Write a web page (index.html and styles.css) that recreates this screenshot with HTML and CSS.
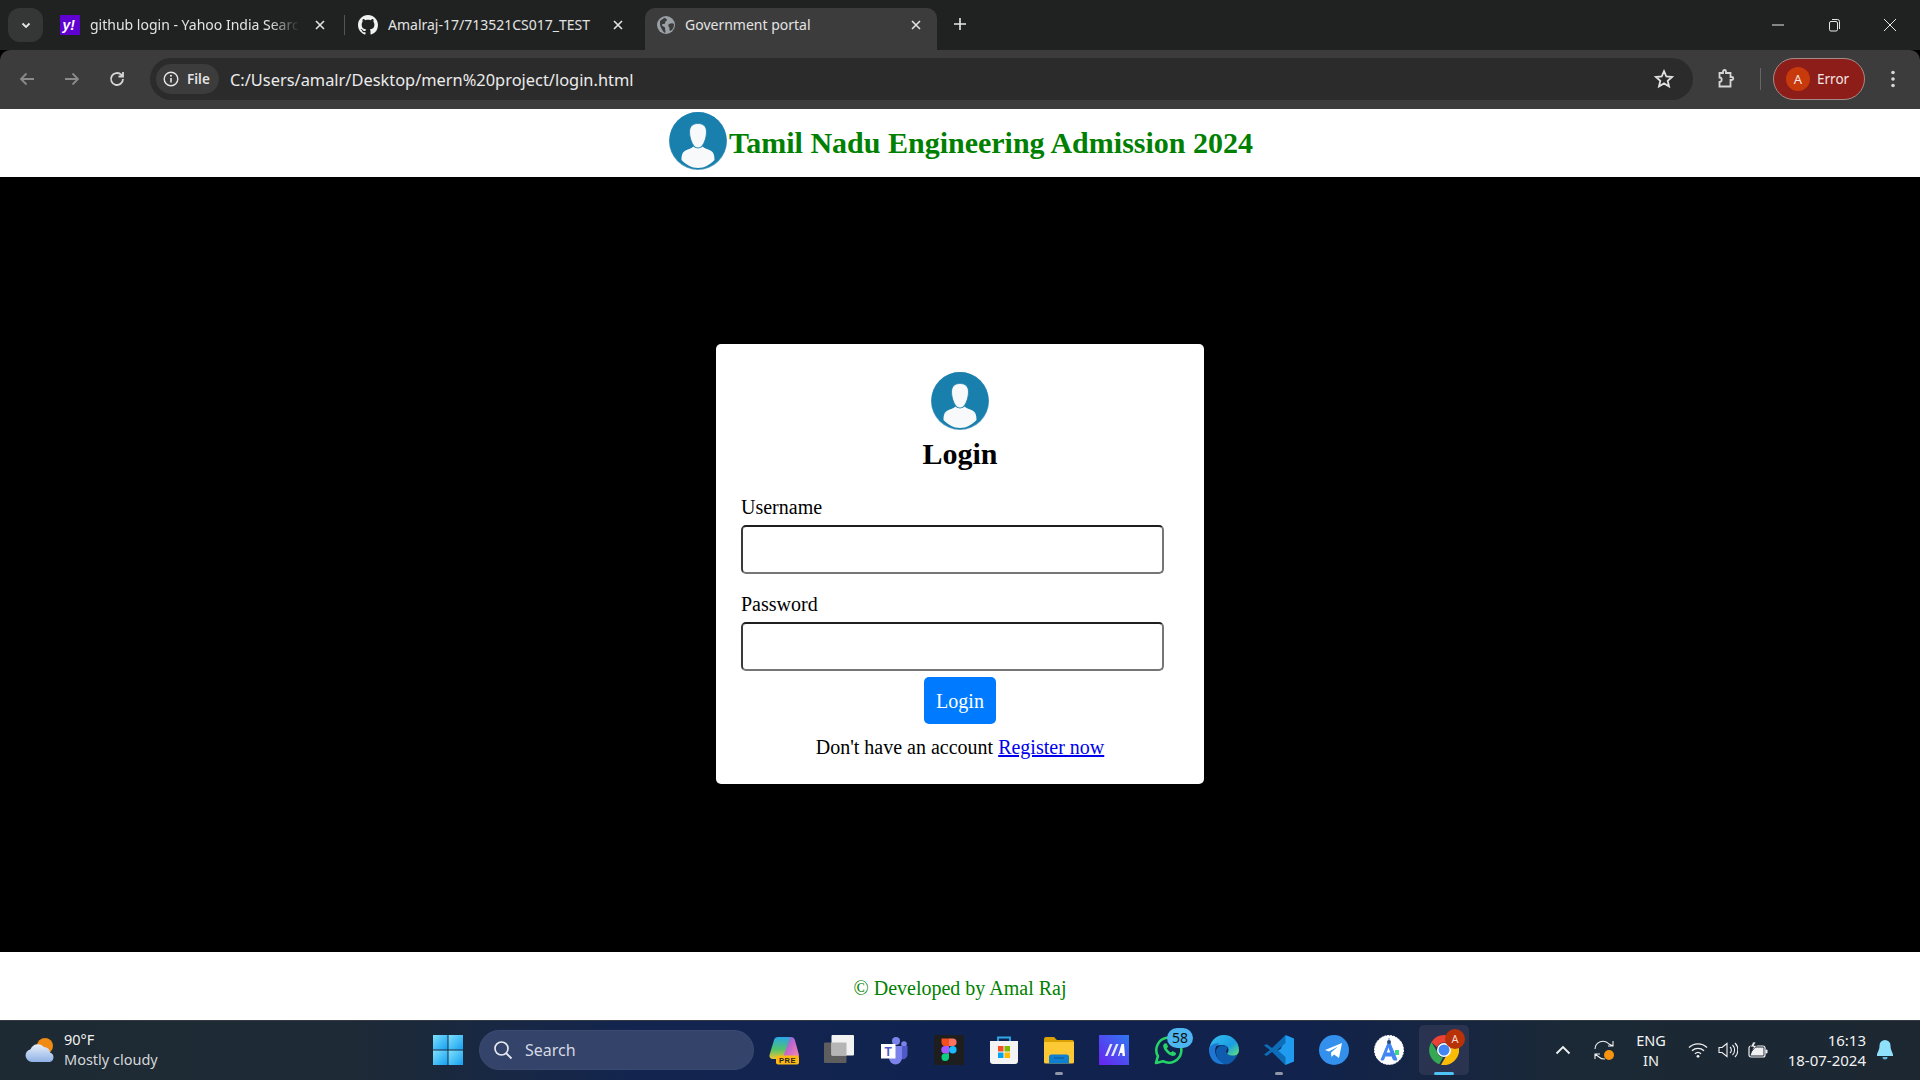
FILE: index.html
```html
<!DOCTYPE html>
<html lang="en">
<head>
  <meta charset="UTF-8" />
  <title>Government portal</title>
  <link rel="stylesheet" href="styles.css">
</head>
<body>

  <svg class="sprites" width="0" height="0">
    <defs>
      <symbol id="avatar" viewBox="0 0 58 58">
        <circle cx="29" cy="29" r="29" fill="#6aa9c9"/>
        <circle cx="29" cy="28.6" r="28.6" fill="#1980ae"/>
        <path d="M12.500 48c0-5 1-8 4-9.500 3-1.500 6-2 8-4 1.500 2 7.500 2 9 0 2 2 5 2.500 8 4 3 1.500 4 4.500 4 9.500-4.500 4.500-10 8-16.500 8s-12-3.500-16.500-8z" fill="#f7f9fa"/>
        <path d="M20.500 20c0-6 3.500-8.500 8.500-8.500s8.500 2.500 8.500 8.500c0 5-2 11-4.500 14-1 1-2.500 2-4 2s-3-1-4-2c-2.500-3-4.500-9-4.500-14z" fill="#f7f9fa" stroke="#1980ae" stroke-width=".8"/>
      </symbol>
      <linearGradient id="edgeA" x1="0" y1="0" x2="1" y2="1"><stop offset="0" stop-color="#35c1f1"/><stop offset=".6" stop-color="#1b9de2"/><stop offset="1" stop-color="#66eb6e"/></linearGradient>
      <linearGradient id="copA" x1="0" y1="0" x2="0" y2="1"><stop offset="0" stop-color="#2aa6e8"/><stop offset=".55" stop-color="#4fc36f"/><stop offset="1" stop-color="#f2c531"/></linearGradient>
      <linearGradient id="copB" x1="0" y1="0" x2="1" y2="1"><stop offset="0" stop-color="#3f7fe8"/><stop offset=".5" stop-color="#c768c9"/><stop offset="1" stop-color="#f58ab0"/></linearGradient>
      <linearGradient id="maBg" x1="1" y1="0" x2="0" y2="1"><stop offset="0" stop-color="#2f78f2"/><stop offset="1" stop-color="#6a22f0"/></linearGradient>
      <linearGradient id="cloud" x1="0" y1="0" x2="0" y2="1"><stop offset="0" stop-color="#e8eff9"/><stop offset="1" stop-color="#8fb2e6"/></linearGradient>
      <linearGradient id="winA" x1="0" y1="0" x2="1" y2="1"><stop offset="0" stop-color="#7fe0fb"/><stop offset="1" stop-color="#14a0f2"/></linearGradient>
    </defs>
  </svg>

  <!-- tab strip -->
  <div class="tabstrip">
    <button class="tab-list">
      <svg width="12" height="12" viewBox="0 0 12 12"><path d="M2.500 4.500 6 8l3.500-3.500" fill="none" stroke="#e6e6e6" stroke-width="1.800"/></svg>
    </button>
    <div class="tab">
      <svg class="favicon" viewBox="0 0 20 20"><rect width="20" height="20" fill="#5f01d1"/><text x="2.500" y="15" class="yahoo-y">y!</text></svg>
      <span class="tab-title fade">github login - Yahoo India Search</span>
      <svg class="tab-close" viewBox="0 0 12 12"><path d="M2 2l8 8M10 2l-8 8"/></svg>
    </div>
    <div class="tab-sep"></div>
    <div class="tab">
      <svg class="favicon" viewBox="0 0 16 16"><path fill="#f2f2f2" d="M8 0C3.580 0 0 3.580 0 8c0 3.540 2.290 6.530 5.470 7.590.4.070.55-.17.55-.38 0-.19-.01-.82-.01-1.490-2.010.37-2.530-.49-2.690-.94-.09-.23-.48-.94-.82-1.130-.28-.15-.68-.52-.01-.53.63-.01 1.080.58 1.230.82.720 1.210 1.870.87 2.330.66.070-.52.280-.87.510-1.070-1.780-.2-3.640-.89-3.640-3.950 0-.87.310-1.590.820-2.150-.08-.2-.36-1.020.08-2.120 0 0 .67-.21 2.200.82.640-.18 1.320-.27 2-.27s1.360.09 2 .27c1.530-1.040 2.200-.82 2.200-.82.440 1.100.16 1.920.08 2.120.51.560.82 1.270.82 2.150 0 3.070-1.870 3.750-3.650 3.950.29.250.54.730.54 1.480 0 1.070-.01 1.930-.01 2.200 0 .21.150.46.550.38A8.010 8.010 0 0 0 16 8c0-4.420-3.580-8-8-8z"/></svg>
      <span class="tab-title">Amalraj-17/713521CS017_TEST</span>
      <svg class="tab-close" viewBox="0 0 12 12"><path d="M2 2l8 8M10 2l-8 8"/></svg>
    </div>
    <div class="tab active">
      <svg class="favicon" viewBox="0 0 20 20"><circle cx="10" cy="10" r="9" fill="#9aa0a6"/><path d="M4 6c2-1 3-3 5-3 1 1 2 1 2 2s-2 1-2 3-3 0-3 2 3 1 3 3 1 4 0 5C7 17 5 13 4 10zM13 9c2-1 4-1 5 0 0 3-1 6-4 7-1-1 0-3-1-4s-1-2 0-3z" fill="#3c3c3c"/></svg>
      <span class="tab-title">Government portal</span>
      <svg class="tab-close" viewBox="0 0 12 12"><path d="M2 2l8 8M10 2l-8 8"/></svg>
    </div>
    <button class="new-tab">
      <svg width="14" height="14" viewBox="0 0 14 14"><path d="M7 1v12M1 7h12" stroke="#e8e8e8" stroke-width="1.600"/></svg>
    </button>
    <div class="window-controls">
      <span class="win-btn"><svg width="14" height="14" viewBox="0 0 14 14"><path d="M1 7h12" stroke="#e8e8e8"/></svg></span>
      <span class="win-btn"><svg width="14" height="14" viewBox="0 0 14 14"><rect x="2.500" y="3.500" width="8" height="9.500" rx="1.500" fill="none" stroke="#e8e8e8"/><path d="M5 1.500h5.500a2 2 0 0 1 2 2V11" fill="none" stroke="#e8e8e8"/></svg></span>
      <span class="win-btn"><svg width="14" height="14" viewBox="0 0 14 14"><path d="M1 1l12 12M13 1L1 13" stroke="#e8e8e8"/></svg></span>
    </div>
  </div>

  <!-- address bar -->
  <div class="toolbar">
    <span class="nav-btn"><svg width="18" height="18" viewBox="0 0 18 18"><path d="M16 9H3M8.500 3.500 3 9l5.500 5.500" class="dim"/></svg></span>
    <span class="nav-btn"><svg width="18" height="18" viewBox="0 0 18 18"><path d="M2 9h13M9.500 3.500 15 9l-5.500 5.500" class="dim"/></svg></span>
    <span class="nav-btn"><svg width="18" height="18" viewBox="0 0 18 18"><path d="M15 9a6 6 0 1 1-1.800-4.300L15 6.500M15 2v4.500h-4.500" class="lit"/></svg></span>
    <div class="omnibox">
      <div class="file-chip">
        <svg width="16" height="16" viewBox="0 0 16 16"><circle cx="8" cy="8" r="6.800" fill="none" stroke="#e6e6e6" stroke-width="1.400"/><path d="M8 7v4.500" stroke="#e6e6e6" stroke-width="1.600"/><circle cx="8" cy="4.800" r="1" fill="#e6e6e6"/></svg>
        <span>File</span>
      </div>
      <span class="url">C:/Users/amalr/Desktop/mern%20project/login.html</span>
      <svg class="star" width="20" height="20" viewBox="0 0 20 20"><path d="M10 2.200l2.300 5.300 5.700.5-4.300 3.800 1.300 5.600-5-3-5 3 1.300-5.600L2 8l5.700-.5z" fill="none" stroke="#e2e2e2" stroke-width="1.800"/></svg>
    </div>
    <span class="nav-btn ext"><svg width="20" height="20" viewBox="0 0 20 20"><path d="M4 4.500h3.500V3a1.500 1.500 0 0 1 3 0v1.500H15v4h1.300a1.500 1.500 0 0 1 0 3H15V18H4v-4.500c1.500 0 2.200-1 2.200-2.200S5.500 9 4 9z" class="lit" transform="translate(-.5 -.5)"/></svg></span>
    <div class="toolbar-sep"></div>
    <div class="profile-pill">
      <span class="profile-dot">A</span>
      <span>Error</span>
    </div>
    <span class="nav-btn menu"><svg width="6" height="20" viewBox="0 0 6 20"><circle cx="3" cy="3.500" r="1.800"/><circle cx="3" cy="10" r="1.800"/><circle cx="3" cy="16.500" r="1.800"/></svg></span>
  </div>

  <!-- the page -->
  <header class="site-header">
    <svg class="logo"><use href="#avatar"/></svg>
    <h1>Tamil Nadu Engineering Admission 2024</h1>
  </header>

  <main class="site-main">
    <form class="login-card">
      <svg class="logo"><use href="#avatar"/></svg>
      <h2>Login</h2>
      <div class="field">
        <label for="username">Username</label>
        <input id="username" type="text">
      </div>
      <div class="field">
        <label for="password">Password</label>
        <input id="password" type="password">
      </div>
      <button class="login-btn" type="button">Login</button>
      <p class="signup">Don't have an account <a href="#">Register now</a></p>
    </form>
  </main>

  <footer class="site-footer">© Developed by Amal Raj</footer>

  <!-- windows taskbar -->
  <div class="taskbar">
    <div class="weather">
      <svg width="32" height="26" viewBox="0 0 32 26"><circle cx="21" cy="9" r="8" fill="#f08a12"/><path d="M8 25a6.500 6.500 0 0 1-1.500-12.800A8 8 0 0 1 20 10a6 6 0 0 1 6 5.500 5 5 0 0 1 0 9.500z" fill="url(#cloud)"/></svg>
      <div class="weather-text">
        <span class="temp">90°F</span>
        <span class="cond">Mostly cloudy</span>
      </div>
    </div>

    <span class="slot">
      <svg width="30" height="30" viewBox="0 0 30 30"><rect x="0" y="0" width="14.500" height="14.500" fill="url(#winA)"/><rect x="15.500" y="0" width="14.500" height="14.500" fill="url(#winA)"/><rect x="0" y="15.500" width="14.500" height="14.500" fill="url(#winA)"/><rect x="15.500" y="15.500" width="14.500" height="14.500" fill="url(#winA)"/></svg>
    </span>

    <div class="search">
      <svg width="20" height="20" viewBox="0 0 20 20"><circle cx="8.500" cy="8.500" r="6.500" fill="none" stroke="#e6e9f0" stroke-width="1.700"/><path d="M13 13l5.500 5.500" stroke="#e6e9f0" stroke-width="1.900"/></svg>
      <span>Search</span>
    </div>

    <div class="apps">
      <span class="slot">
        <svg width="30" height="30" viewBox="0 0 30 30">
          <path d="M19 2h3c2 0 3.300 1 3.900 3L29.700 19c.6 2.500-.7 4-3 4H13z" fill="url(#copB)"/>
          <path d="M9 2h9.500c1.500 0 2.200 1 1.700 2.500L14.500 21c-.7 2-2 3-4 3H4c-2.700 0-4-1.700-3.500-4L5 5c.6-2 2-3 4-3z" fill="url(#copA)"/>
          <rect x="7" y="20.500" width="23" height="9" rx="2" fill="#fdb813"/>
          <text x="18.500" y="27.700" text-anchor="middle" class="pre">PRE</text>
        </svg>
      </span>
      <span class="slot">
        <svg width="30" height="30" viewBox="0 0 30 30"><rect x="0" y="7.500" width="22.500" height="20.500" rx="1" fill="#5e5e5e"/><rect x="7.500" y="0" width="22.500" height="20.500" rx="1" fill="#f2f2f2"/><rect x="7.500" y="7.500" width="15" height="13" fill="#b5b5b5"/></svg>
      </span>
      <span class="slot">
        <svg width="30" height="30" viewBox="0 0 30 30"><circle cx="25" cy="9" r="2.800" fill="#7b83eb"/><circle cx="17" cy="6" r="4" fill="#7b83eb"/><path d="M20 11h8.500v9a4.500 4.500 0 0 1-7 3.500z" fill="#5059c9"/><path d="M10 11h13v12a6.500 6.500 0 0 1-13 0z" fill="#7b83eb"/><rect x="2" y="9" width="14.500" height="14.500" fill="#fff"/><text x="9.200" y="20.500" text-anchor="middle" class="teams-t">T</text></svg>
      </span>
      <span class="slot">
        <svg width="30" height="30" viewBox="0 0 30 30"><rect width="30" height="30" fill="#1e1e1e"/><path d="M7.500 3.500h7.500v7.500H11a3.750 3.750 0 0 1-3.500-3.750z" fill="#f24e1e"/><path d="M15 3.500h3.800a3.750 3.750 0 0 1 0 7.500H15z" fill="#ff7262"/><path d="M15 11h-4a3.750 3.750 0 0 0 0 7.500h4z" fill="#a259ff"/><circle cx="18.800" cy="14.750" r="3.750" fill="#1abcfe"/><path d="M11 18.500h4v3.750a3.750 3.750 0 1 1-4-3.750z" fill="#0acf83"/></svg>
      </span>
      <span class="slot">
        <svg width="30" height="30" viewBox="0 0 30 30"><path d="M9 6V2.500h12V6" fill="none" stroke="#2fa8e8" stroke-width="1.800"/><path d="M1 6h28v20a3 3 0 0 1-3 3H4a3 3 0 0 1-3-3z" fill="#f4f4f4"/><rect x="9" y="11" width="5.500" height="5.500" fill="#f25022"/><rect x="15.500" y="11" width="5.500" height="5.500" fill="#7fba00"/><rect x="9" y="17.500" width="5.500" height="5.500" fill="#00a4ef"/><rect x="15.500" y="17.500" width="5.500" height="5.500" fill="#ffb900"/></svg>
      </span>
      <span class="slot open">
        <svg width="30" height="28" viewBox="0 0 30 28"><path d="M0 3a2 2 0 0 1 2-2h8l3 3h15a2 2 0 0 1 2 2v3H0z" fill="#d9a106"/><path d="M0 6h30v20a1.500 1.500 0 0 1-1.500 1.500h-27A1.500 1.500 0 0 1 0 26z" fill="#fcc934"/><path d="M5 27.500V21a2.500 2.500 0 0 1 2.500-2.500h15A2.500 2.500 0 0 1 25 21v6.500z" fill="#0f7fd0"/><path d="M10 22h10" stroke="#0b5ea0" stroke-width="1.200"/></svg>
      </span>
      <span class="slot">
        <svg width="30" height="30" viewBox="0 0 30 30"><rect width="30" height="30" fill="url(#maBg)"/><path d="M6 21l5-12h2.500l-5 12zM12 21l5-12h2.500l-5 12z" fill="#e6e8ff"/><path d="M19 21l3.500-12H25l1 12h-2.500l-.2-3h-2.200l-.8 3z" fill="#fff"/></svg>
      </span>
      <span class="slot has-badge">
        <svg width="30" height="30" viewBox="0 0 30 30"><path d="M2 28l1.900-6.800A12.500 12.500 0 1 1 9 26.200z" fill="none" stroke="#25d366" stroke-width="2.600" stroke-linejoin="round"/><path d="M10.500 8.500c-2 1.500-1.500 4 .5 7s5 5 7.500 5.500c2 .3 3.800-1.200 3.500-3l-3.500-2-1.500 1.500c-1.500-.5-3.500-2.500-4.200-4.200l1.400-1.500-1.700-3.500z" fill="#25d366"/></svg>
        <span class="badge-count">58</span>
      </span>
      <span class="slot">
        <svg width="30" height="30" viewBox="0 0 30 30"><path d="M15 0a15 15 0 0 1 15 15c0 4-3 6.500-7 6.500-3 0-5-1-5-2.500 0-1 1.500-1.500 1.500-4 0-3-3-5-6.500-5C6 10 1.500 13 0 17 0 7 6.500 0 15 0z" fill="url(#edgeA)"/><path d="M0 15c0-4 5-7.500 10.500-6.500-4 2-5 6-4 10 1 4.500 5 8.500 10 10.500C7 31 0 24 0 15z" fill="#1c78d4"/><path d="M7 17c0-4 3-6.500 7-6.500 3 0 5 2 4 4-1 1.500-1 3 .5 4.500 2 1.500 7 2.500 10 .5-2 5-7 10-12 10C11 27 7 22 7 17z" fill="#0f5cae"/></svg>
      </span>
      <span class="slot open">
        <svg width="30" height="30" viewBox="0 0 30 30"><path d="M21.500 0 30 3.500v23L21.500 30 10 18.500l7-5z" fill="#1f9cf0"/><path d="M21.500 0 8 13 2.500 9 0 10.500 6 15l-6 4.500L2.500 21 8 17l13.500 13V22l-8-7 8-7z" fill="#0e6db8"/></svg>
      </span>
      <span class="slot">
        <svg width="30" height="30" viewBox="0 0 30 30"><circle cx="15" cy="15" r="15" fill="#3390ec"/><path d="M6 15l17-7-3 15-5-3.500-2.500 2.500-.5-4.500 7-6-9 5z" fill="#fff"/></svg>
      </span>
      <span class="slot">
        <svg width="30" height="30" viewBox="0 0 30 30"><circle cx="15" cy="15" r="14.500" fill="#fff" stroke="#fff" stroke-dasharray="2 1"/><path d="M15 3v3M7 25l7-17h2l7 17h-3.500l-1.500-4h-7l-1.500 4zm5-7h5l-2.500-6.500z" fill="#4285f4" stroke="#4285f4"/><circle cx="15" cy="7" r="2" fill="#2b4a7a"/><path d="M21 15h4v5h-4z" fill="#3ddc84"/></svg>
      </span>
      <span class="slot chrome">
        <svg width="30" height="30" viewBox="0 0 30 30"><path d="M15 0a15 15 0 0 1 13 7.500H15a7.500 7.500 0 0 0-7 4.800L2.500 7A15 15 0 0 1 15 0z" fill="#ea4335"/><path d="M2.500 7 8 16.500a7.500 7.500 0 0 0 6 6L10.300 29.300A15 15 0 0 1 2.500 7z" fill="#34a853"/><path d="M28 7.500A15 15 0 0 1 12 29.700l6.500-10.900A7.500 7.500 0 0 0 20 7.500z" fill="#fbbc05"/><circle cx="15" cy="15" r="7" fill="#fff"/><circle cx="15" cy="15" r="5.500" fill="#4285f4"/></svg>
        <span class="badge-a">A</span>
      </span>
    </div>

    <div class="tray">
      <svg class="tray-chevron" width="16" height="10" viewBox="0 0 16 10"><path d="M1.500 8.500 8 2l6.500 6.500" fill="none" stroke="#f2f2f2" stroke-width="1.800"/></svg>
      <span class="tray-sync">
        <svg width="20" height="20" viewBox="0 0 20 20"><path d="M1 9a8 8 0 0 1 14-5l4 2M19 1v5h-5M1 14l4 3a8 8 0 0 0 6 2M1 19v-5h5" fill="none" stroke="#f0f0f0" stroke-width="1.100"/><circle cx="15" cy="15" r="5" fill="#f7930e"/></svg>
      </span>
      <div class="lang"><span>ENG</span><span>IN</span></div>
      <svg class="tray-icon" width="20" height="16" viewBox="0 0 20 16"><path d="M1 5.500a13 13 0 0 1 18 0M4 8.700a9 9 0 0 1 12 0M7 11.700a4.500 4.500 0 0 1 6 0" fill="none" stroke="#f0f0f0" stroke-width="1.400"/><circle cx="10" cy="14.300" r="1.400" fill="#f0f0f0"/></svg>
      <svg class="tray-icon" width="20" height="16" viewBox="0 0 20 16"><path d="M1 5.500h3L9 1.500v13l-5-4H1z" fill="none" stroke="#f0f0f0" stroke-width="1.100"/><path d="M12 5a4 4 0 0 1 0 6M14.500 3a7 7 0 0 1 0 10M17 1a10 10 0 0 1 0 14" fill="none" stroke="#f0f0f0" stroke-width="1.100"/></svg>
      <svg class="tray-icon" width="20" height="16" viewBox="0 0 20 16"><rect x="1" y="4" width="16" height="11" rx="2" fill="none" stroke="#f0f0f0" stroke-width="1.200"/><rect x="17.500" y="7.500" width="2" height="4" rx="1" fill="#f0f0f0"/><path d="M2.500 13.500l3-8h10v8z" fill="#f0f0f0"/><path d="M5 0 2.500 5h3L4 9l5-5.500H6L8 0z" fill="#f0f0f0" stroke="#1c2731" stroke-width=".7"/></svg>
      <div class="clock"><span>16:13</span><span>18-07-2024</span></div>
      <svg class="bell" width="16" height="20" viewBox="0 0 16 20"><path d="M8 0a5.500 5.500 0 0 1 5.500 5.500c0 5 2.500 7 2.500 9.500v1H0v-1c0-2.500 2.500-4.500 2.500-9.500A5.500 5.500 0 0 1 8 0z" fill="#8fe0fb"/><path d="M5.500 17h5a2.500 2.500 0 0 1-5 0z" fill="#5bb8dc"/></svg>
    </div>
  </div>

</body>
</html>
```

FILE: styles.css
```css
body {
  margin: 0;
  height: 100vh;
  display: flex;
  flex-direction: column;
  overflow: hidden;
  background-color: #000;
  font-family: "Liberation Serif", serif;
}

.sprites {
  position: absolute;
}

/* browser chrome */

.tabstrip {
  height: 50px;
  flex: none;
  display: flex;
  align-items: flex-end;
  padding-left: 8px;
  box-sizing: border-box;
  background-color: #202222;
  color: #e3e3e3;
  font-family: "Noto Sans", sans-serif;
  font-size: 14px;
}

.tab-list {
  width: 35px;
  height: 34px;
  margin: 0 5px 8px 0;
  padding: 0;
  border: none;
  border-radius: 12px;
  background-color: #353636;
  display: flex;
  align-items: center;
  justify-content: center;
}

.tab {
  width: 292px;
  height: 42px;
  margin-right: 6px;
  padding: 0 14px 9px 12px;
  box-sizing: border-box;
  display: flex;
  align-items: center;
  gap: 10px;
  border-radius: 10px 10px 0 0;
}

.tab-sep {
  width: 1px;
  height: 20px;
  margin: 0 1px 15px -2px;
  background-color: #555;
}

.tab.active {
  background-color: #3c3c3c;
  margin-left: 1px;
  padding-left: 11px;
  padding-right: 15px;
  gap: 9px;
}

.favicon {
  width: 20px;
  height: 20px;
  flex: none;
}

.yahoo-y {
  font-family: "Liberation Sans", sans-serif;
  font-weight: 700;
  font-size: 14px;
  font-style: italic;
  fill: #fff;
}

.tab-title {
  flex: 1;
  white-space: nowrap;
  overflow: hidden;
}

.tab-title.fade {
  -webkit-mask-image: linear-gradient(90deg, #000 84%, transparent 98%);
  mask-image: linear-gradient(90deg, #000 84%, transparent 98%);
}

.tab-close {
  width: 12px;
  height: 12px;
  flex: none;
  fill: none;
  stroke: #e3e3e3;
  stroke-width: 1.600;
}

.new-tab {
  width: 36px;
  height: 36px;
  margin: 0 0 8px -1px;
  padding: 0;
  border: none;
  background: none;
  display: flex;
  align-items: center;
  justify-content: center;
}

.window-controls {
  margin: 0 2px 0 auto;
  align-self: flex-start;
  display: flex;
  height: 49px;
}

.win-btn {
  width: 56px;
  display: flex;
  align-items: center;
  justify-content: center;
}

.toolbar {
  height: 59px;
  flex: none;
  box-sizing: border-box;
  padding: 8px 9px 0;
  display: flex;
  align-items: flex-start;
  background-color: #3c3c3c;
  border-radius: 10px 10px 0 0;
  color: #e3e3e3;
  font-family: "Noto Sans", sans-serif;
}

.nav-btn {
  width: 36px;
  height: 42px;
  margin-right: 9px;
  flex: none;
  display: flex;
  align-items: center;
  justify-content: center;
}

.nav-btn svg path.dim,
.nav-btn svg path.lit {
  fill: none;
  stroke-width: 1.800;
}

.nav-btn svg path.dim {
  stroke: #8a8a8a;
}

.nav-btn svg path.lit {
  stroke: #d6d6d6;
}

.omnibox {
  flex: 1;
  height: 42px;
  margin-left: 6px;
  padding: 0 19px 0 6px;
  box-sizing: border-box;
  display: flex;
  align-items: center;
  border-radius: 21px;
  background-color: #2b2b2b;
}

.file-chip {
  width: 63px;
  height: 30px;
  flex: none;
  box-sizing: border-box;
  padding-left: 7px;
  display: flex;
  align-items: center;
  gap: 8px;
  border-radius: 15px;
  background-color: #3c3c3c;
  font-size: 13.500px;
  font-weight: 600;
}

.url {
  margin-left: 11px;
  font-size: 16.400px;
  white-space: nowrap;
  color: #ececec;
}

.star {
  margin-left: auto;
}

.nav-btn.ext {
  margin: 0 0 0 15px;
}

.toolbar-sep {
  width: 1px;
  height: 22px;
  margin: 10px 0 0 16px;
  background-color: #666;
}

.profile-pill {
  width: 92px;
  height: 42px;
  margin-left: 12px;
  flex: none;
  box-sizing: border-box;
  padding-left: 12px;
  display: flex;
  align-items: center;
  gap: 7px;
  border: 1px solid #a58b87;
  border-radius: 21px;
  background-color: #8c1d18;
  font-size: 13.500px;
  color: #f5e5e3;
}

.profile-dot {
  width: 24px;
  height: 24px;
  border-radius: 50%;
  background-color: #c8390b;
  display: flex;
  align-items: center;
  justify-content: center;
  font-size: 13px;
}

.nav-btn.menu {
  margin: 0 0 0 10px;
  fill: #d6d6d6;
}

/* page */

.site-header {
  height: 68px;
  flex: none;
  box-sizing: border-box;
  padding-left: 2px;
  display: flex;
  align-items: center;
  justify-content: center;
  gap: 2px;
  background-color: #fff;
}

.logo {
  width: 58px;
  height: 58px;
  display: block;
}

.site-header .logo {
  margin-bottom: 5px;
}

.site-header h1 {
  margin: 0;
  font-size: 30px;
  color: #008000;
}

.site-main {
  flex: 1;
  box-sizing: border-box;
  padding-bottom: 1px;
  display: flex;
  align-items: center;
  justify-content: center;
  background-color: #000;
}

.login-card {
  width: 488px;
  height: 440px;
  box-sizing: border-box;
  padding: 27px 25px 0;
  display: flex;
  flex-direction: column;
  align-items: center;
  border-radius: 5px;
  background-color: #fff;
}

.login-card .logo {
  margin-top: 1px;
}

.login-card h2 {
  margin: 7px 0 26px;
  font-size: 30px;
  line-height: 33px;
}

.field {
  width: 423px;
  margin-right: 15px;
  margin-bottom: 19px;
  font-size: 20px;
}

.field label {
  display: block;
  line-height: 23px;
  margin-bottom: 6px;
}

.field input {
  display: block;
  width: 100%;
  height: 49px;
  box-sizing: border-box;
  border-width: 2px;
  border-style: solid;
  border-color: #1f1f1f #767676 #767676 #3a3a3a;
  border-radius: 5px;
  background-color: #fff;
}

.field + .field {
  margin-bottom: 6px;
}

.login-btn {
  width: 72px;
  height: 47px;
  padding: 2px 0 0;
  border: none;
  border-radius: 5px;
  background-color: #007bff;
  color: #fff;
  font-family: inherit;
  font-size: 20px;
}

.signup {
  margin: 12px 0 0;
  font-size: 20px;
  line-height: 23px;
}

.signup a {
  color: #0000ee;
}

.site-footer {
  height: 68px;
  flex: none;
  box-sizing: border-box;
  padding-top: 5px;
  display: flex;
  align-items: center;
  justify-content: center;
  background-color: #fff;
  color: #008000;
  font-size: 20px;
}

/* taskbar */

.taskbar {
  height: 60px;
  flex: none;
  box-sizing: border-box;
  padding-bottom: 1px;
  display: flex;
  align-items: center;
  border-top: 1px solid #343a42;
  background: linear-gradient(90deg, #1e2a33 0%, #1e2a35 18%, #13254f 33%, #10224f 50%, #11224c 68%, #1b2936 82%, #1c2731 100%);
  color: #f2f2f2;
  font-family: "Noto Sans", sans-serif;
  font-size: 14px;
}

.weather {
  width: 423px;
  flex: none;
  box-sizing: border-box;
  padding-left: 24px;
  display: flex;
  align-items: center;
  gap: 8px;
}

.weather-text {
  display: flex;
  flex-direction: column;
  margin-bottom: 2px;
  line-height: 20px;
  font-size: 14.500px;
}

.weather-text .cond {
  color: #d4d7db;
}

.slot {
  width: 50px;
  height: 50px;
  flex: none;
  position: relative;
  display: flex;
  align-items: center;
  justify-content: center;
}

.search {
  width: 275px;
  height: 40px;
  margin-left: 6px;
  flex: none;
  box-sizing: border-box;
  padding-left: 13px;
  display: flex;
  align-items: center;
  gap: 12px;
  border: 1px solid #3a4a70;
  border-radius: 20px;
  background-color: #34436a;
  font-size: 16px;
  color: #d5d9e2;
}

.apps {
  margin-left: 5px;
  display: flex;
  gap: 5px;
}

.pre {
  font-family: "Liberation Sans", sans-serif;
  font-weight: 700;
  font-size: 7.500px;
  letter-spacing: .5px;
  fill: #222;
}

.teams-t {
  font-family: "Liberation Sans", sans-serif;
  font-weight: 700;
  font-size: 12px;
  fill: #5059c9;
}

/* little dash under a running app */
.slot.open::after {
  content: "";
  position: absolute;
  left: 21px;
  bottom: 0;
  width: 8px;
  height: 3px;
  border-radius: 2px;
  background-color: #8f97a8;
}

.badge-count {
  position: absolute;
  top: 3px;
  left: 23px;
  width: 26px;
  height: 20px;
  border-radius: 10px;
  background-color: #4db5f0;
  color: #111;
  font-size: 14px;
  line-height: 20px;
  text-align: center;
}

.slot.chrome {
  border-radius: 5px;
  background-color: #2a3450;
}

.slot.chrome::after {
  content: "";
  position: absolute;
  left: 15px;
  bottom: 0;
  width: 20px;
  height: 3px;
  border-radius: 2px;
  background-color: #4fc3f7;
}

.badge-a {
  position: absolute;
  top: 4px;
  left: 26px;
  width: 20px;
  height: 20px;
  border-radius: 50%;
  background-color: #b83208;
  color: #f3d9cf;
  font-size: 11px;
  line-height: 20px;
  text-align: center;
}

.tray {
  flex: 1;
  display: flex;
  align-items: center;
  margin-left: 86px;
  font-size: 14.500px;
}

.tray-chevron {
  flex: none;
}

.tray-sync {
  margin-left: 23px;
  display: flex;
}

.lang {
  width: 30px;
  margin: 0 22px 0 22px;
  display: flex;
  flex-direction: column;
  align-items: center;
  line-height: 20px;
}

.tray-icon {
  margin-right: 10px;
  flex: none;
}

.clock {
  width: 88px;
  display: flex;
  flex-direction: column;
  align-items: flex-end;
  line-height: 20px;
  font-size: 15px;
}

.bell {
  margin-left: 11px;
  flex: none;
}
```
